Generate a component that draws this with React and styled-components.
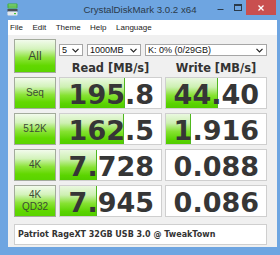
import React from "react";
import styled, { createGlobalStyle } from "styled-components";

const GlobalStyle = createGlobalStyle`
  html, body {
    margin: 0;
    padding: 0;
  }
  body {
    width: 280px;
    height: 255px;
    overflow: hidden;
    background: #6ea5e1;
  }
`;

const Window = styled.div`
  width: 280px;
  height: 255px;
  background: #6ea5e1;
  display: flex;
  flex-direction: column;
`;

const TitleBar = styled.div`
  height: 20px;
  display: grid;
  grid-template-columns: 1fr auto 1fr;
  align-items: start;
`;

const AppIcon = styled.svg`
  margin: 3px 0 0 7px;
  display: block;
`;

const Title = styled.div`
  font-family: "Liberation Sans", Arial, sans-serif;
  font-size: 9.7px;
  line-height: 20px;
  color: #2b3a4a;
  white-space: nowrap;
`;

const Controls = styled.div`
  display: flex;
  justify-content: flex-end;
  margin-right: 4px;
`;

const CtlButton = styled.div`
  width: ${p => p.$w}px;
  height: 15px;
  display: flex;
  align-items: center;
  justify-content: center;
  background: ${p => p.$bg || "transparent"};
`;

const MenuBar = styled.div`
  margin: 0 3px 0 8px;
  height: 15px;
  background: #ffffff;
  display: flex;
  align-items: center;
  gap: 9.5px;
  padding-left: 2px;
  font-family: "Liberation Sans", Arial, sans-serif;
  font-size: 8px;
  color: #1a1a1a;
`;

const Content = styled.div`
  flex: 1;
  margin: 0 3px 8px 8px;
  background: #f0f0f0;
  padding: 4px 10px 0 6px;
  display: flex;
  flex-direction: column;
`;

const Board = styled.div`
  display: grid;
  grid-template-columns: 42px 103px 102px;
  grid-auto-rows: 32px;
  grid-template-rows: 34px;
  column-gap: 3px;
  row-gap: 4px;
`;

const TestButton = styled.div`
  box-sizing: border-box;
  border: 1px solid #a3ab9c;
  background: linear-gradient(
    to bottom,
    #f2fbec 0%,
    #d4f3bc 28%,
    #8ee43c 55%,
    #62d800 80%,
    #5ad400 100%
  );
  display: flex;
  flex-direction: column;
  align-items: center;
  justify-content: center;
  font-family: "Liberation Sans", Arial, sans-serif;
  font-size: ${p => (p.$big ? 12 : 10)}px;
  line-height: 12px;
  color: #3c4a34;
`;

const TopControls = styled.div`
  grid-column: 2 / 4;
  display: flex;
  flex-direction: column;
`;

const SelectRow = styled.div`
  margin-top: 5px;
  display: flex;
  gap: 4px;
`;

const Select = styled.div`
  box-sizing: border-box;
  width: ${p => p.$w}px;
  height: 12px;
  background: #ffffff;
  border: 1px solid #a6a6a6;
  display: flex;
  align-items: center;
  justify-content: space-between;
  padding: 0 3px 0 2px;
  font-family: "Liberation Sans", Arial, sans-serif;
  font-size: 9px;
  color: #111;
`;

const HeaderRow = styled.div`
  display: grid;
  grid-template-columns: 103px 102px;
  column-gap: 3px;
  padding-top: 6px;
`;

const Header = styled.div`
  text-align: center;
  font-family: "DejaVu Sans", Verdana, sans-serif;
  font-weight: bold;
  font-size: 11.4px;
  line-height: 12px;
  color: #333333;
  white-space: nowrap;
`;

const Cell = styled.div`
  box-sizing: border-box;
  border: 1px solid #cfcfcf;
  background:
    linear-gradient(#4fb81e, #4fb81e) no-repeat ${p => p.$fill - 1}px 0 / ${p => (p.$fill ? 1 : 0)}px 100%,
    linear-gradient(
      to bottom,
      #eaf8e0 0%,
      #cdf0b2 30%,
      #86e232 58%,
      #5ad400 85%,
      #52cc00 100%
    ) no-repeat 0 0 / ${p => p.$fill}px 100%,
    #ffffff;
  display: flex;
  align-items: center;
  justify-content: flex-end;
  padding: 2px 7px 0 0;
  font-family: "DejaVu Sans", Verdana, sans-serif;
  font-weight: bold;
  font-size: 27px;
  color: #363636;
  white-space: nowrap;
`;

const InfoBar = styled.div`
  box-sizing: border-box;
  margin-top: 7px;
  width: 253px;
  height: 21px;
  background: #ffffff;
  border: 1px solid #cfcfcf;
  display: flex;
  align-items: center;
  padding-left: 3px;
  font-family: "DejaVu Sans", Verdana, sans-serif;
  font-weight: bold;
  font-size: 8px;
  color: #333333;
  white-space: nowrap;
`;

const Chevron = () => (
  <svg width="7" height="5" viewBox="0 0 7 5">
    <polyline points="0.5,0.8 3.5,3.8 6.5,0.8" fill="none" stroke="#222" strokeWidth="1.2" />
  </svg>
);

const rows = [
  { label: ["Seq"], read: "195.8", readFill: 65, write: "44.40", writeFill: 52 },
  { label: ["512K"], read: "162.5", readFill: 64, write: "1.916", writeFill: 25 },
  { label: ["4K"], read: "7.728", readFill: 37, write: "0.088", writeFill: 0 },
  { label: ["4K", "QD32"], read: "7.945", readFill: 37, write: "0.086", writeFill: 0 }
];

export default function App() {
  return (
    <>
      <GlobalStyle />
      <Window>
        <TitleBar>
          <AppIcon width="11" height="13" viewBox="0 0 11 13">
            <rect x="0.5" y="0.5" width="10" height="5" rx="1" fill="#3fae3a" />
            <rect x="1.5" y="1.5" width="8" height="1" fill="#9fe08f" />
            <rect x="1.5" y="3.5" width="8" height="1" fill="#8fd47f" />
            <rect x="0.5" y="6" width="10" height="2.5" fill="#4a4f55" />
            <rect x="0.5" y="8.5" width="10" height="4" rx="0.8" fill="#e6e8ea" />
            <rect x="7" y="10" width="2" height="1.2" fill="#3fc43a" />
          </AppIcon>
          <Title>CrystalDiskMark 3.0.2 x64</Title>
          <Controls>
            <CtlButton $w={17}>
              <svg width="7" height="6" viewBox="0 0 7 6">
                <rect x="0.5" y="4" width="6" height="1" fill="#2b3a4a" />
              </svg>
            </CtlButton>
            <CtlButton $w={17}>
              <svg width="8" height="7" viewBox="0 0 8 7">
                <rect x="0.5" y="0.5" width="7" height="6" fill="none" stroke="#2b3a4a" strokeWidth="1" />
                <rect x="0.5" y="0.5" width="7" height="1.5" fill="#2b3a4a" />
              </svg>
            </CtlButton>
            <CtlButton $w={30} $bg="#c94f4f">
              <svg width="6" height="6" viewBox="0 0 6 6">
                <path d="M0.5 0.5 L5.5 5.5 M5.5 0.5 L0.5 5.5" stroke="#ffffff" strokeWidth="1.3" />
              </svg>
            </CtlButton>
          </Controls>
        </TitleBar>
        <MenuBar>
          <span>File</span>
          <span>Edit</span>
          <span>Theme</span>
          <span>Help</span>
          <span>Language</span>
        </MenuBar>
        <Content>
          <Board>
            <TestButton $big>All</TestButton>
            <TopControls>
              <SelectRow>
                <Select $w={24}>
                  <span>5</span>
                  <Chevron />
                </Select>
                <Select $w={54}>
                  <span>1000MB</span>
                  <Chevron />
                </Select>
                <Select $w={122}>
                  <span>K: 0% (0/29GB)</span>
                  <Chevron />
                </Select>
              </SelectRow>
              <HeaderRow>
                <Header>Read [MB/s]</Header>
                <Header>Write [MB/s]</Header>
              </HeaderRow>
            </TopControls>
            {rows.map(r => (
              <React.Fragment key={r.label.join("")}>
                <TestButton>
                  {r.label.map(l => (
                    <span key={l}>{l}</span>
                  ))}
                </TestButton>
                <Cell $fill={r.readFill}>{r.read}</Cell>
                <Cell $fill={r.writeFill}>{r.write}</Cell>
              </React.Fragment>
            ))}
          </Board>
          <InfoBar>Patriot RageXT 32GB USB 3.0 @ TweakTown</InfoBar>
        </Content>
      </Window>
    </>
  );
}
